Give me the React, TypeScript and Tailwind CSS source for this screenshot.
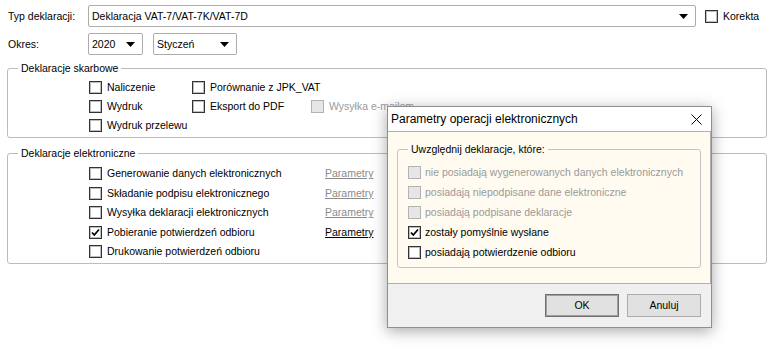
import React from 'react'

function Arrow() {
  return (
    <svg width="9" height="5" viewBox="0 0 9 5" className="shrink-0">
      <path d="M0 0h9L4.5 5z" fill="#000" />
    </svg>
  )
}

function Combo({ text, className }: { text: string; className: string }) {
  return (
    <div className={`flex h-[22px] items-center justify-between rounded-[2px] border border-[#acacac] bg-white pl-[3px] pr-[7px] ${className}`}>
      <span>{text}</span>
      <Arrow />
    </div>
  )
}

function Box({ checked, disabled }: { checked?: boolean; disabled?: boolean }) {
  return (
    <span
      className={
        disabled
          ? 'flex h-[13px] w-[13px] shrink-0 items-center justify-center border border-[#b3b3b3] bg-[#e6e6e6]'
          : 'flex h-[13px] w-[13px] shrink-0 items-center justify-center border border-[#333] bg-white shadow-[inset_0_0_0_1px_#bdbdbd]'
      }
    >
      {checked && (
        <svg width="9" height="9" viewBox="0 0 9 9">
          <path d="M1 4.5L3.3 7 8 1.5" fill="none" stroke="#000" strokeWidth="1.8" />
        </svg>
      )}
    </span>
  )
}

function Check({
  label,
  checked,
  disabled,
  className = 'h-[19px]',
  gap = 'gap-[5px]',
}: {
  label: string
  checked?: boolean
  disabled?: boolean
  className?: string
  gap?: string
}) {
  return (
    <div className={`flex items-center ${gap} ${className}`}>
      <Box checked={checked} disabled={disabled} />
      <span className={disabled ? 'whitespace-nowrap text-[#9a9a9a]' : 'whitespace-nowrap'}>{label}</span>
    </div>
  )
}

const electronic = [
  { label: 'Generowanie danych elektronicznych', link: true },
  { label: 'Składanie podpisu elektronicznego', link: true },
  { label: 'Wysyłka deklaracji elektronicznych', link: true },
  { label: 'Pobieranie potwierdzeń odbioru', link: true, checked: true, active: true },
  { label: 'Drukowanie potwierdzeń odbioru', link: false },
]

const dialogItems = [
  { label: 'nie posiadają wygenerowanych danych elektronicznych', disabled: true },
  { label: 'posiadają niepodpisane dane elektroniczne', disabled: true },
  { label: 'posiadają podpisane deklaracje', disabled: true },
  { label: 'zostały pomyślnie wysłane', checked: true },
  { label: 'posiadają potwierdzenie odbioru' },
]

export default function App() {
  return (
    <div className="relative h-[352px] w-[771px] overflow-hidden bg-white font-['Liberation_Sans',Arial,sans-serif] text-[10.5px] leading-[13px] text-black">
      {/* top fields */}
      <div className="flex items-center pl-[8px] pt-[5px]">
        <span className="w-[80px]">Typ deklaracji:</span>
        <Combo text="Deklaracja VAT-7/VAT-7K/VAT-7D" className="w-[608px]" />
        <div className="ml-[9px] flex items-center gap-[5px]">
          <Box />
          <span>Korekta</span>
        </div>
      </div>
      <div className="mt-[6px] flex items-center pl-[8px]">
        <span className="w-[80px]">Okres:</span>
        <Combo text="2020" className="w-[55px]" />
        <Combo text="Styczeń" className="ml-[10px] w-[84px]" />
      </div>

      {/* Deklaracje skarbowe */}
      <fieldset className="ml-[7px] mr-[4px] mt-[7px] rounded-[3px] border border-[#bcbcbc]">
        <legend className="ml-[10px] px-[3px] leading-[13px]">Deklaracje skarbowe</legend>
        <div className="grid grid-cols-[103px_119px_auto] pb-[2px] pl-[81px] pt-[3px]">
          <Check label="Naliczenie" />
          <Check label="Porównanie z JPK_VAT" />
          <div />
          <Check label="Wydruk" />
          <Check label="Eksport do PDF" />
          <Check label="Wysyłka e-mailem" disabled />
          <Check label="Wydruk przelewu" />
        </div>
      </fieldset>

      {/* Deklaracje elektroniczne */}
      <fieldset className="ml-[7px] mr-[4px] mt-[9px] rounded-[3px] border border-[#bcbcbc]">
        <legend className="ml-[10px] px-[3px] leading-[13px]">Deklaracje elektroniczne</legend>
        <div className="pb-[1px] pl-[81px] pt-[4px]">
          {electronic.map((row) => (
            <div key={row.label} className="flex h-[19.5px] items-center">
              <div className="w-[236px]">
                <Check label={row.label} checked={row.checked} className="h-[19.5px]" />
              </div>
              {row.link && (
                <span className={row.active ? 'underline' : 'text-[#8a8a8a] underline'}>Parametry</span>
              )}
            </div>
          ))}
        </div>
      </fieldset>

      {/* dialog */}
      <div className="absolute left-[387px] top-[106px] flex h-[222px] w-[325px] flex-col border border-[#8f8f8f] bg-[#f0f0f0] shadow-[0_3px_14px_rgba(0,0,0,0.35)]">
        <div className="flex h-[24px] shrink-0 items-center justify-between bg-white pl-[3px] pr-[9px] text-[12px]">
          <span>Parametry operacji elektronicznych</span>
          <svg width="11" height="11" viewBox="0 0 11 11">
            <path d="M0.5 0.5l10 10M10.5 0.5l-10 10" stroke="#000" strokeWidth="1" />
          </svg>
        </div>
        <div className="flex h-[153px] shrink-0 flex-col border-y border-r border-[#b0b0b0] bg-[#fffbf0]">
          <fieldset className="ml-[9px] mr-[9px] mt-[11px] rounded-[3px] border border-[#c4c4c4]">
            <legend className="ml-[10px] px-[3px] leading-[13px]">Uwzględnij deklaracje, które:</legend>
            <div className="pb-[5px] pl-[10px] pt-[6px]">
              {dialogItems.map((it) => (
                <Check
                  key={it.label}
                  label={it.label}
                  checked={it.checked}
                  disabled={it.disabled}
                  className="h-[20px]"
                  gap="gap-[4px]"
                />
              ))}
            </div>
          </fieldset>
        </div>
        <div className="flex flex-1 items-start justify-end gap-[8px] pr-[10px] pt-[10px]">
          <button className="flex h-[23px] w-[74px] items-center justify-center border border-[#707070] bg-[#e1e1e1] shadow-[inset_0_0_0_1px_#a0a0a0]">
            OK
          </button>
          <button className="flex h-[23px] w-[74px] items-center justify-center border border-[#adadad] bg-[#e1e1e1]">
            Anuluj
          </button>
        </div>
      </div>
    </div>
  )
}
